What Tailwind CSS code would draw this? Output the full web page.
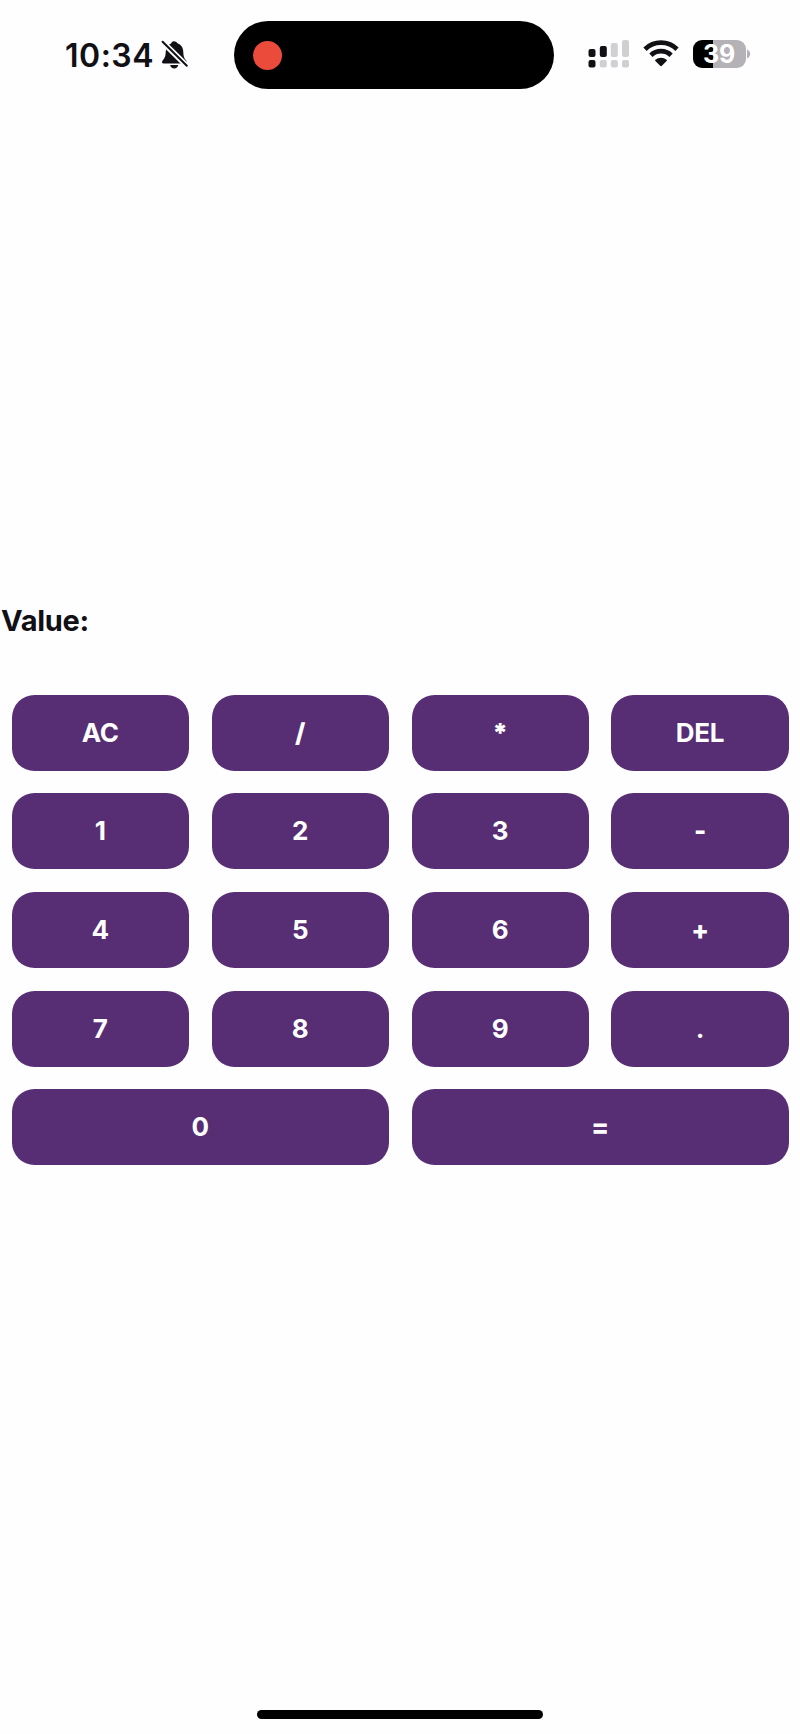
<!DOCTYPE html>
<html lang="en">
<head>
<meta charset="utf-8">
<title>Calculator</title>
<script src="https://cdn.jsdelivr.net/npm/@tailwindcss/browser@4"></script>
</head>
<body class="bg-[#fefdff]">
<div class="w-[800px] h-[1734px] flex flex-col overflow-hidden bg-[#fefdff] font-[Inter,sans-serif] text-[#111014]">
  <header class="h-[110px] shrink-0 flex items-start">
    <div class="w-[234px] pt-[35px] pl-[65px] flex items-start">
      <span class="mt-px w-[88px] text-[32px] leading-[40px] font-semibold tracking-[0.500px] whitespace-nowrap">10:34</span>
      <svg class="ml-[8px] mt-[4px] shrink-0" width="28" height="31" viewBox="0 0 28 31">
        <path fill="#111014" d="M12.7 2.2c2.2 0 3.4 1.2 4 2.3 3.8 1.2 5.5 4.4 5.6 8.6.1 5.200 1.300 6.600 3 8.600 1 1.400.6 2.800-1 2.800H2.700c-1.700 0-2.200-1.400-1.200-2.800 2-2.200 3-3.600 3.200-8.600.2-4.200 1.900-7.400 5.400-8.600.4-1.100 1.100-2.300 2.600-2.300zM9.200 26h8c-.3 2.200-1.900 3.500-4 3.500S9.500 28.200 9.200 26z"/>
        <path stroke="#fefdff" stroke-width="5.600" d="M0 1.500L27.500 28.500"/>
        <path stroke="#111014" stroke-width="2" stroke-linecap="round" d="M1.600 2.700L25.800 26.700"/>
      </svg>
    </div>
    <div class="mt-[21px] w-[320px] h-[68px] rounded-full bg-black flex items-center pl-[19px]">
      <div class="size-[29px] rounded-full bg-[#eb4b3b]"></div>
    </div>
    <div class="pt-[39px] pl-[34px] flex items-start">
      <svg width="42" height="30" viewBox="0 0 42 30">
        <g fill="#111014">
          <rect x=".5" y="10" width="7" height="8" rx="2"/><rect x="11.800" y="7" width="7" height="11" rx="2"/><rect x=".5" y="21" width="7" height="7.500" rx="2"/>
        </g>
        <g fill="#d0cfd2">
          <rect x="22.800" y="4" width="7" height="14" rx="2"/><rect x="34" y="1" width="7" height="17" rx="2"/><rect x="11.800" y="21" width="7" height="7.500" rx="2"/><rect x="22.800" y="21" width="7" height="7.500" rx="2"/><rect x="34" y="21" width="7" height="7.500" rx="2"/>
        </g>
      </svg>
      <svg class="ml-[12.500px]" width="36" height="30" viewBox="0 0 36 30">
        <g fill="none" stroke="#111014" stroke-width="4.700">
          <path d="M2 10.200a23 23 0 0 1 32 0"/>
          <path d="M7.900 16.200a14.700 14.700 0 0 1 20.200 0"/>
        </g>
        <path fill="#111014" d="M12.400 20.700a8.800 8.800 0 0 1 11.200 0c.5.500.5.900 0 1.400l-4.700 4.600c-.6.600-1.200.6-1.800 0l-4.700-4.600c-.5-.5-.5-.9 0-1.400z"/>
      </svg>
      <div class="ml-[14px] mt-[0.500px] flex items-center">
        <div class="w-[53px] h-[28.500px] rounded-[9px] bg-[linear-gradient(90deg,#000_0_20.500px,#b5b2b7_20.500px)] flex items-center justify-center text-white text-[25px] leading-[28px] font-bold tracking-[-0.300px]">39</div>
        <svg class="ml-[1.500px]" width="4" height="10" viewBox="0 0 4 10"><path fill="#b5b2b7" d="M0 .5c1.900.7 3.200 2.400 3.200 4.500S1.900 8.800 0 9.500z"/></svg>
      </div>
    </div>
  </header>
  <main class="grow">
    <div class="mt-[491px] h-[39px] pl-[1px] text-[29px] leading-[40px] font-bold tracking-[-0.300px]">Value:</div>
    <div class="mt-[54.800px] pl-[11.600px] pr-[11.400px] grid grid-cols-4 gap-x-[22.800px] gap-y-[22.650px] text-white text-[26px] leading-[32px] font-bold tracking-[-0.300px]">
      <button class="h-[76px] rounded-[22.500px] bg-[#572d73]">AC</button>
      <button class="h-[76px] rounded-[22.500px] bg-[#572d73] font-extrabold">/</button>
      <button class="h-[76px] rounded-[22.500px] bg-[#572d73] font-black">*</button>
      <button class="h-[76px] rounded-[22.500px] bg-[#572d73]">DEL</button>
      <button class="h-[76px] rounded-[22.500px] bg-[#572d73]">1</button>
      <button class="h-[76px] rounded-[22.500px] bg-[#572d73]">2</button>
      <button class="h-[76px] rounded-[22.500px] bg-[#572d73]">3</button>
      <button class="h-[76px] rounded-[22.500px] bg-[#572d73] font-extrabold">-</button>
      <button class="h-[76px] rounded-[22.500px] bg-[#572d73]">4</button>
      <button class="h-[76px] rounded-[22.500px] bg-[#572d73]">5</button>
      <button class="h-[76px] rounded-[22.500px] bg-[#572d73]">6</button>
      <button class="h-[76px] rounded-[22.500px] bg-[#572d73] font-extrabold">+</button>
      <button class="h-[76px] rounded-[22.500px] bg-[#572d73]">7</button>
      <button class="h-[76px] rounded-[22.500px] bg-[#572d73]">8</button>
      <button class="h-[76px] rounded-[22.500px] bg-[#572d73]">9</button>
      <button class="h-[76px] rounded-[22.500px] bg-[#572d73]">.</button>
      <button class="col-span-2 h-[76px] rounded-[22.500px] bg-[#572d73]">0</button>
      <button class="col-span-2 h-[76px] rounded-[22.500px] bg-[#572d73] font-extrabold">=</button>
    </div>
  </main>
  <footer class="pb-[15px] flex justify-center">
    <div class="w-[286px] h-[9px] rounded-full bg-black"></div>
  </footer>
</div>
</body>
</html>
